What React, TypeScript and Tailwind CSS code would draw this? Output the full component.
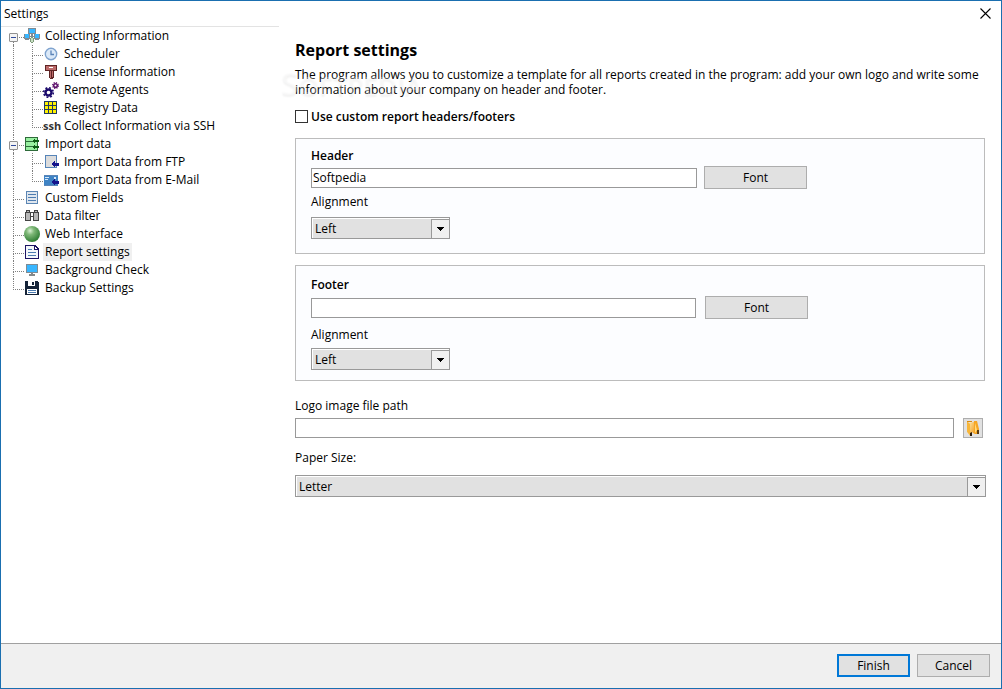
import { useState } from 'react';
import type { ReactNode } from 'react';

type TreeItem = {
  label: string;
  icon: ReactNode;
  children?: TreeItem[];
};

const Icon = ({ children, smooth = false }: { children: ReactNode; smooth?: boolean }) => (
  <svg
    viewBox="0 0 16 16"
    className="h-4 w-4 shrink-0"
    shapeRendering={smooth ? 'auto' : 'crispEdges'}
    aria-hidden="true"
  >
    {children}
  </svg>
);

const NetworkIcon = () => (
  <Icon>
    <path d="M4 0h8v6H4zM0 6h6v5H0zM10 6h6v5h-6z" fill="#808b93" />
    <path d="M5 1h6v4H5zM1 6h4v4H1zM11 6h4v4h-4z" fill="#38b6ff" />
    <path d="M1 11h4v1H1zM11 11h4v1h-4zM7 6h2v3H7zM6 8h4v1H6z" fill="#808b93" />
    <path d="M7 9h2v1h1v4H9v1H7v-1H6v-4h1z" fill="#7c9a78" />
    <path d="M7 10h2v4H7z" fill="#c9dfc4" />
  </Icon>
);

const ClockIcon = () => (
  <Icon smooth>
    <circle cx="8" cy="8" r="5.7" fill="#dbe9f8" stroke="#7fa3cf" strokeWidth="1.4" />
    <path d="M8 4.5V8.5H11" fill="none" stroke="#5b84b8" strokeWidth="1.3" />
  </Icon>
);

const LicenseIcon = () => (
  <Icon>
    <path d="M2 1h12v6h-3v7h-1v1H7v-1H6V7H2z" fill="#5e2424" />
    <path d="M3 2h10v4H3z" fill="#bd6b6b" />
    <path d="M6 3h4v1H6z" fill="#fff" />
    <path d="M7 7h1v7H7zM9 7h1v6H9z" fill="#bd6b6b" />
  </Icon>
);

const GearsIcon = () => (
  <Icon smooth>
    <circle cx="5.5" cy="10.5" r="3" fill="none" stroke="#1b0a6b" strokeWidth="2.4" />
    <circle cx="5.5" cy="10.5" r="4.8" fill="none" stroke="#1b0a6b" strokeWidth="1.6" strokeDasharray="1.9 1.87" />
    <circle cx="12.5" cy="3.5" r="1.8" fill="none" stroke="#5c0f6b" strokeWidth="1.5" />
    <circle cx="12.5" cy="3.5" r="2.9" fill="none" stroke="#5c0f6b" strokeWidth="1.2" strokeDasharray="1.2 1.08" />
  </Icon>
);

const RegistryIcon = () => (
  <Icon>
    <path d="M1 1h13v13H1z" fill="#223a5e" />
    <path
      d="M2 2h3v3H2zM6 2h3v3H6zM10 2h3v3h-3zM2 6h3v3H2zM6 6h3v3H6zM10 6h3v3h-3zM2 10h3v3H2zM6 10h3v3H6zM10 10h3v3h-3z"
      fill="#fff200"
    />
  </Icon>
);

const SshIcon = () => (
  <span className="w-4 shrink-0 text-[11px] leading-4 font-bold text-[#333]" aria-hidden="true">
    ssh
  </span>
);

const ImportIcon = () => (
  <Icon>
    <path d="M1 1h13v14H1z" fill="#2e6b3a" />
    <path d="M2 2h11v3H2zM2 6h11v4H2zM2 11h11v3H2z" fill="#98f0a0" />
    <path d="M8 5l3-3v2h4v2h-4v2zM8 11l3-3v2h4v2h-4v2z" fill="#0c5a14" />
  </Icon>
);

const FtpIcon = () => (
  <Icon>
    <path d="M2 1h12v13H2z" fill="#5584b8" />
    <path d="M3 2h10v11H3z" fill="#dcdcdc" />
    <path d="M8 10l4-3v2h4v3h-4v2z" fill="#14148c" />
  </Icon>
);

const MailIcon = () => (
  <Icon>
    <path d="M1 3h14v11H1z" fill="#3f83c4" />
    <path d="M1 3h14v1H1zM1 13h14v1H1z" fill="#5b86b8" />
    <path d="M2 5h4v1H2zM2 7h3v1H2zM11 5h2v2h-2z" fill="#d6e8fa" />
    <path d="M8 10l4-3v2h4v3h-4v2z" fill="#14148c" />
  </Icon>
);

const FieldsIcon = () => (
  <Icon>
    <path d="M2 1h12v13H2z" fill="#5b86b4" />
    <path d="M3 2h10v11H3z" fill="#dfe6ee" />
    <path d="M4 4h8v1H4zM4 7h8v1H4zM4 10h8v1H4z" fill="#4c7bb0" />
  </Icon>
);

const FilterIcon = () => (
  <Icon>
    <path d="M2 2h4v2h1v9H1V4h1zM10 2h4v2h1v9H9V4h1zM7 4h2v1H7zM7 8h2v1H7z" fill="#444" />
    <path d="M3 3h2v1H3zM11 3h2v1h-2zM2 5h4v7H2zM10 5h4v7h-4z" fill="#b8b8b8" />
  </Icon>
);

const SphereIcon = () => (
  <Icon smooth>
    <defs>
      <radialGradient id="sphere" cx="0.38" cy="0.3" r="0.7">
        <stop offset="0" stopColor="#d8efd2" />
        <stop offset="0.35" stopColor="#7fb878" />
        <stop offset="1" stopColor="#2f7d34" />
      </radialGradient>
    </defs>
    <circle cx="8" cy="8" r="8" fill="url(#sphere)" />
  </Icon>
);

const ReportIcon = () => (
  <Icon>
    <path d="M1 1h10l4 4v10H1z" fill="#1c1464" />
    <path d="M2 2h8v4h4v8H2z" fill="#f4f7fb" />
    <path d="M11 3l2 2h-2z" fill="#fff" />
    <path d="M4 5h4v1H4zM4 8h8v1H4zM4 11h8v1H4z" fill="#4c7bb0" />
  </Icon>
);

const MonitorIcon = () => (
  <Icon>
    <path d="M2 2h12v9H2z" fill="#7f8b94" />
    <path d="M3 3h10v7H3z" fill="#38b6ff" />
    <path d="M7 11h2v1H7zM5 12h6v2H5z" fill="#85888a" />
  </Icon>
);

const DiskIcon = () => (
  <Icon>
    <path d="M1 1h12l2 2v12H1z" fill="#152338" />
    <path d="M4 1h7v5H4zM3 9h10v5H3z" fill="#fff" />
    <path d="M8 2h2v3H8z" fill="#152338" />
    <path d="M4 10h8v1H4zM4 12h8v1H4z" fill="#4c7bb0" />
  </Icon>
);

const FolderIcon = () => (
  <svg viewBox="0 0 16 16" className="h-4 w-4 shrink-0" aria-hidden="true">
    <defs>
      <linearGradient id="folder" x1="0" y1="0" x2="1" y2="1">
        <stop offset="0" stopColor="#ffedb0" />
        <stop offset="1" stopColor="#f39a1c" />
      </linearGradient>
    </defs>
    <path d="M9 1h3l2 8v5h-4L8 13z" fill="#f6a623" />
    <path d="M12 10h2v4h-2z" fill="#5a3a10" />
    <path d="M10 3l2 7-2 3z" fill="#ffdc80" />
    <path d="M3 3l6-1v10l-3 1v3H5L3 13z" fill="url(#folder)" />
    <path d="M2 1l3 3v11l-3-3z" fill="#f7b63a" />
    <path d="M5 13l2-1v4H5z" fill="#2b1c0a" />
    <path d="M2 1.5h5" stroke="#d98a10" strokeWidth="1" fill="none" />
  </svg>
);

const items: TreeItem[] = [
  {
    label: 'Collecting Information',
    icon: <NetworkIcon />,
    children: [
      { label: 'Scheduler', icon: <ClockIcon /> },
      { label: 'License Information', icon: <LicenseIcon /> },
      { label: 'Remote Agents', icon: <GearsIcon /> },
      { label: 'Registry Data', icon: <RegistryIcon /> },
      { label: 'Collect Information via SSH', icon: <SshIcon /> },
    ],
  },
  {
    label: 'Import data',
    icon: <ImportIcon />,
    children: [
      { label: 'Import Data from FTP', icon: <FtpIcon /> },
      { label: 'Import Data from E-Mail', icon: <MailIcon /> },
    ],
  },
  { label: 'Custom Fields', icon: <FieldsIcon /> },
  { label: 'Data filter', icon: <FilterIcon /> },
  { label: 'Web Interface', icon: <SphereIcon /> },
  { label: 'Report settings', icon: <ReportIcon /> },
  { label: 'Background Check', icon: <MonitorIcon /> },
  { label: 'Backup Settings', icon: <DiskIcon /> },
];

// Dotted connector from the parent line to a row's icon
const Branch = ({ first = false, last = false }: { first?: boolean; last?: boolean }) => (
  <span className="flex h-[18px] w-[11px] shrink-0 flex-col">
    <span className={`h-[11px] border-b border-dotted border-[#808080] ${first ? '' : 'border-l'}`} />
    <span className={`flex-1 border-dotted border-[#808080] ${last ? '' : 'border-l'}`} />
  </span>
);

const Tree = () => {
  const [selected, setSelected] = useState('Report settings');
  const [closed, setClosed] = useState<string[]>([]);

  const toggle = (label: string) =>
    setClosed(closed.includes(label) ? closed.filter((l) => l !== label) : [...closed, label]);

  const renderLabel = (item: TreeItem) => (
    <button
      type="button"
      onClick={() => setSelected(item.label)}
      className={`ml-[3px] h-[18px] px-0.5 leading-[18px] whitespace-nowrap ${selected === item.label ? 'bg-[#f0f0f0]' : ''}`}
    >
      {item.label}
    </button>
  );

  return (
    <ul className="pl-3">
      {items.map((item, i) => (
        <li key={item.label}>
          <div className="relative flex h-[18px] items-center">
            <Branch first={i === 0} last={i === items.length - 1} />
            {item.children && (
              <button
                type="button"
                aria-label={`Toggle ${item.label}`}
                onClick={() => toggle(item.label)}
                className="absolute top-1.5 -left-1 flex h-[9px] w-[9px] items-center justify-center rounded-[1px] border border-[#919191] bg-[#f4f4f4]"
              >
                <span className="h-px w-[5px] bg-[#2f4a9c]" />
              </button>
            )}
            {item.icon}
            {renderLabel(item)}
          </div>
          {item.children && !closed.includes(item.label) && (
            <ul className="border-l border-dotted border-[#808080] pl-[18px]">
              {item.children.map((child, j) => (
                <li key={child.label} className="flex h-[18px] items-center">
                  <Branch last={j === item.children!.length - 1} />
                  {child.icon}
                  {renderLabel(child)}
                </li>
              ))}
            </ul>
          )}
        </li>
      ))}
    </ul>
  );
};

const Select = ({ id, options, className = '' }: { id: string; options: string[]; className?: string }) => (
  <div className={`relative h-[22px] border border-[#999] bg-white pt-px pl-px ${className}`}>
    <select id={id} className="block h-full w-full appearance-none bg-[#e1e1e1] pl-0.5 outline-none">
      {options.map((option) => (
        <option key={option}>{option}</option>
      ))}
    </select>
    <span className="pointer-events-none absolute top-px -right-px -bottom-px flex w-[19px] items-center justify-center border border-[#999] bg-[#f0f0f0]">
      <svg viewBox="0 0 7 4" className="h-1 w-[7px]" shapeRendering="crispEdges" aria-hidden="true">
        <path d="M0 0h7v1H6v1H5v1H4v1H3V3H2V2H1V1H0z" fill="#000" />
      </svg>
    </span>
  </div>
);

const button = 'border border-[#adadad] bg-[#e1e1e1] text-center';
const textBox = 'h-5 min-w-0 border border-[#999] bg-white px-px outline-none';
const alignments = ['Left', 'Center', 'Right'];

const App = () => (
  <div className="flex min-h-screen flex-col border border-[#1a6fb0] bg-white font-['Open_Sans','Noto_Sans',sans-serif] text-[12px] leading-[15px] text-black">
    <header className="flex h-[25px] items-center justify-between pr-2.5 pl-[3px]">
      <h1>Settings</h1>
      <button type="button" aria-label="Close">
        <svg viewBox="0 0 11 11" className="h-[11px] w-[11px]" aria-hidden="true">
          <path d="M0.5 0.5l10 10M10.5 0.5l-10 10" stroke="#000" strokeWidth="1.1" />
        </svg>
      </button>
    </header>

    <div className="flex flex-1">
      <nav className="w-[278px] shrink-0 border-t border-[#e3e3e3]">
        <Tree />
      </nav>

      <main className="min-w-0 flex-1 pt-3 pr-4 pl-4">
        <h2 className="text-[16px] leading-6 font-bold">Report settings</h2>
        <div className="relative mt-[5px]">
          <p>
            The program allows you to customize a template for all reports created in the program: add your own logo and write some
            information about your company on header and footer.
          </p>
          {/* faint watermark over the description */}
          <span
            aria-hidden="true"
            className="pointer-events-none absolute top-0 -left-3.5 text-[26px] leading-8 font-semibold text-white/30 select-none [text-shadow:0_2px_2px_rgb(0_0_0/0.05)]"
          >
            <span className="text-[32px]">S</span>OFTPEDIA
          </span>
        </div>

        <label className="mt-[9px] flex h-5 items-center gap-[3px] font-semibold">
          <input type="checkbox" className="h-[13px] w-[13px] appearance-none border border-[#333] bg-white checked:bg-[#333]" />
          Use custom report headers/footers
        </label>

        <section className="mt-3 h-[116px] border border-[#bcbcbc] bg-[#fcfdff] px-[15px] pt-[9px]">
          <label htmlFor="header" className="block font-semibold">Header</label>
          <div className="mt-[3px] flex items-center gap-[7px]">
            <input id="header" type="text" defaultValue="Softpedia" className={`${textBox} max-w-[386px] flex-1`} />
            <button type="button" className={`${button} h-[23px] w-[103px]`}>Font</button>
          </div>
          <label htmlFor="header-align" className="mt-[5px] block">Alignment</label>
          <Select id="header-align" options={alignments} className="mt-2 w-[139px]" />
        </section>

        <section className="mt-[11px] h-[116px] border border-[#bcbcbc] bg-[#fcfdff] px-[15px] pt-[11px]">
          <label htmlFor="footer" className="block font-semibold">Footer</label>
          <div className="mt-1 flex items-center gap-[9px]">
            <input id="footer" type="text" className={`${textBox} max-w-[385px] flex-1`} />
            <button type="button" className={`${button} h-[23px] w-[103px]`}>Font</button>
          </div>
          <label htmlFor="footer-align" className="mt-2 block">Alignment</label>
          <Select id="footer-align" options={alignments} className="mt-1.5 w-[139px]" />
        </section>

        <label htmlFor="logo" className="mt-[17px] block">Logo image file path</label>
        <div className="mt-[5px] flex items-center gap-[9px] pr-0.5">
          <input id="logo" type="text" className={`${textBox} flex-1`} />
          <button type="button" aria-label="Browse" className={`${button} flex h-5 w-5 items-center justify-center`}>
            <FolderIcon />
          </button>
        </div>
        <label htmlFor="paper" className="mt-3 block">Paper Size:</label>
        <Select id="paper" options={['Letter', 'A4', 'Legal']} className="-mr-px mt-2.5" />
      </main>
    </div>

    <footer className="flex h-[45px] items-center justify-end gap-[7px] border-t border-[#a0a0a0] bg-[#f0f0f0] pr-[11px] pb-0.5">
      <button type="submit" className="h-[23px] w-[73px] border-2 border-[#0078d7] bg-[#e1e1e1]">Finish</button>
      <button type="button" className={`${button} h-[23px] w-[73px]`}>Cancel</button>
    </footer>
  </div>
);

export default App;
